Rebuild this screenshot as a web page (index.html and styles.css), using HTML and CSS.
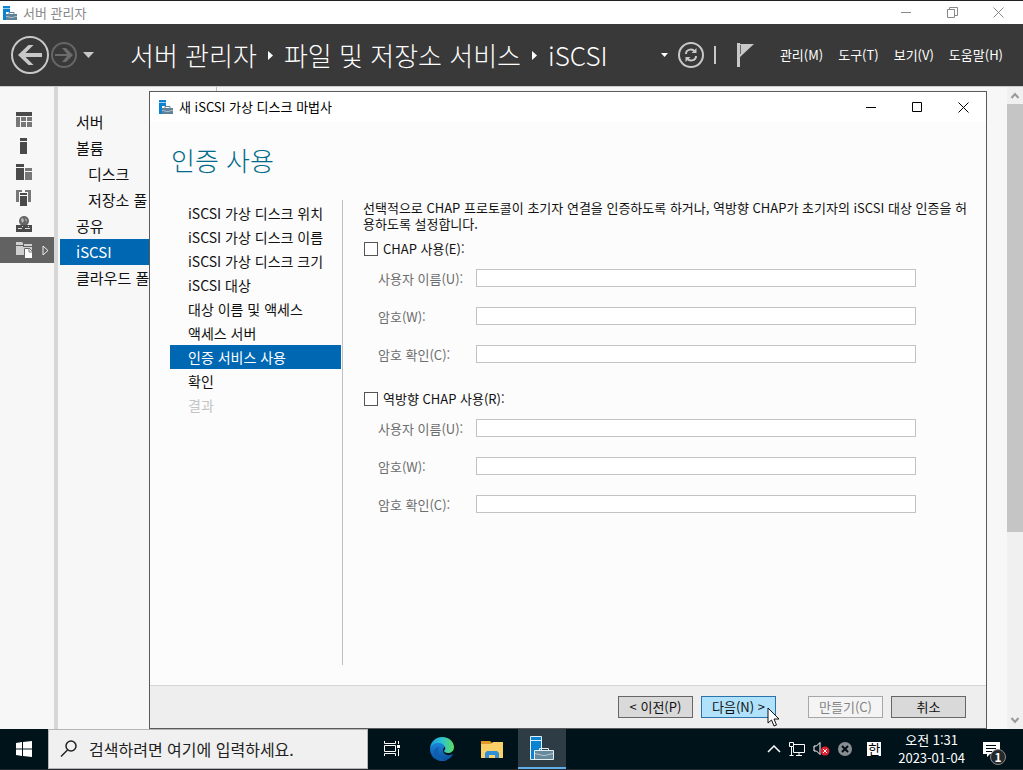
FILE: index.html
```html
<!DOCTYPE html>
<html lang="ko">
<head>
  <meta charset="UTF-8">
  <meta name="viewport" content="width=device-width, initial-scale=1.0">
  <title>서버 관리자</title>
  <link rel="stylesheet" href="styles.css">
</head>
<body>
<svg width="0" height="0" class="defs" aria-hidden="true">
  <symbol id="server-icon" viewBox="0 0 14 14">
    <path fill="#0a84d0" d="M0 0h7v6H3v8H0z"/>
    <path fill="#fff" d="M0 2h7v.6H0z"/>
    <path fill="none" stroke="#5f8296" d="M6 8V6.500h5V8"/>
    <path fill="#5f8296" d="M3 8h11v6H3z"/>
    <path fill="#c5d3db" d="M3 10l5 1h1l5-1v.8l-5 1H8l-5-1z"/>
  </symbol>
  <symbol id="close-icon" viewBox="0 0 11 11">
    <path fill="none" stroke="currentColor" d="M.5.5l10 10M10.5.5l-10 10"/>
  </symbol>
</svg>

<div class="titlebar">
  <svg class="app-icon"><use href="#server-icon"/></svg>
  <span class="titlebar-text">서버 관리자</span>
  <button class="win-btn" aria-label="최소화"><svg width="11" height="11"><path d="M0 5.500h10" stroke="currentColor"/></svg></button>
  <button class="win-btn" aria-label="이전 크기로"><svg width="11" height="11" fill="none" stroke="currentColor"><path d="M.5 2.500h7v8h-7zM2.500 2.500v-2h8v8h-3"/></svg></button>
  <button class="win-btn" aria-label="닫기"><svg width="11" height="11"><use href="#close-icon"/></svg></button>
</div>

<header class="header">
  <button class="icon-btn" aria-label="뒤로">
    <svg width="40" height="40" viewBox="0 0 40 40"><circle cx="20" cy="20" r="18" fill="none" stroke="#c8c8c8" stroke-width="2"/><path d="M32 18H15.500l8-8h-5L8 20l10.500 10h5l-8-8H32z" fill="#c8c8c8"/></svg>
  </button>
  <button class="icon-btn" aria-label="앞으로">
    <svg width="28" height="28" viewBox="0 0 28 28"><circle cx="14" cy="14" r="12" fill="none" stroke="#666" stroke-width="2"/><path d="M5 13h12l-5-6h4l7 7-7 7h-4l5-6H5z" fill="#6c6c6c"/></svg>
  </button>
  <button class="icon-btn history" aria-label="기록"><svg width="11" height="7"><path d="M0 0h11L5.500 6z" fill="#c8c8c8"/></svg></button>
  <div class="breadcrumb">
    <span>서버 관리자</span>
    <svg width="5" height="9"><path d="M0 0l5 4.500L0 9z" fill="#fff"/></svg>
    <span>파일 및 저장소 서비스</span>
    <svg width="5" height="9"><path d="M0 0l5 4.500L0 9z" fill="#fff"/></svg>
    <span>iSCSI</span>
  </div>
  <div class="header-tools">
    <button class="icon-btn" aria-label="목록"><svg width="7" height="4"><path d="M0 0h7L3.500 4z" fill="#fff"/></svg></button>
    <button class="icon-btn" aria-label="새로 고침">
      <svg width="26" height="26" viewBox="0 0 26 26" fill="none" stroke="#c8c8c8"><circle cx="13" cy="13" r="12" stroke-width="2"/><path stroke-width="2" d="M8 12c0-5 7-6 9-2M18 14c0 5-7 6-9 2"/><path d="M18.500 6v5h-5zM7.500 20v-5h5z" fill="#c8c8c8" stroke="none"/></svg>
    </button>
    <span class="separator"></span>
    <button class="icon-btn flag" aria-label="알림">
      <svg width="17" height="24" viewBox="0 0 17 24"><path fill="#c8c8c8" d="M0 0h3v24H0zM3 1h14L3 14z"/><path d="M3.500 2v9" stroke="#666"/></svg>
    </button>
  </div>
  <nav class="menu">
    <a href="#">관리(M)</a>
    <a href="#">도구(T)</a>
    <a href="#">보기(V)</a>
    <a href="#">도움말(H)</a>
  </nav>
</header>

<main class="workspace">
  <div class="rail">
    <button class="rail-btn" aria-label="대시보드"><svg width="16" height="16"><path fill="#4a4a4a" d="M0 0h16v4H0z"/><path fill="#777" d="M0 5h4v10H0zM5 5h5v4H5zM11 5h5v4h-5zM5 10h5v5H5zM11 10h5v5h-5z"/></svg></button>
    <button class="rail-btn" aria-label="로컬 서버"><svg width="16" height="16"><path fill="#4a4a4a" d="M4 0h7v3H4zM4 4h7v12H4z"/></svg></button>
    <button class="rail-btn" aria-label="모든 서버"><svg width="16" height="16"><path fill="#4a4a4a" d="M0 0h8v3H0zM0 4h8v12H0z"/><path fill="#777" d="M9 4h7v3H9zM9 8h7v8H9z"/></svg></button>
    <button class="rail-btn" aria-label="서버 그룹"><svg width="16" height="16"><path fill="#777" d="M0 0h6v2H3v10H0zM9 0h6v12h-3V2H9z"/><path fill="#4a4a4a" d="M4 3h7v2H4zM4 6h7v10H4z"/></svg></button>
    <button class="rail-btn" aria-label="원격 서비스"><svg width="16" height="16"><circle cx="8" cy="5" r="5" fill="#666"/><path d="M5 3l2-1 1 3-2 2zM9 2l2 2-1 2z" fill="#bbb"/><path fill="#4a4a4a" d="M0 9h16v7H0z"/><path fill="#ddd" d="M2 12h4v1H2zM9 12h5v1H9zM6 10h1v1H6zM12 10h1v1h-1z"/></svg></button>
    <button class="rail-btn active" aria-label="파일 서비스">
      <svg width="16" height="16"><path fill="#d0d0d0" d="M0 0h6l1 1v2H0zM0 4h7v9H0zM8 2h8v2H8zM7 5h9v8H7z"/><path fill="#fff" stroke="#666" d="M8.500 6.500h5l3 3v7h-8z"/><path d="M13 6v4h3" fill="none" stroke="#777"/></svg>
      <svg width="7" height="11" class="rail-arrow"><path d="M1 1l5 4.500L1 10z" fill="none" stroke="#eee"/></svg>
    </button>
  </div>

  <nav class="side-nav">
    <a href="#">서버</a>
    <a href="#">볼륨</a>
    <a href="#" class="sub">디스크</a>
    <a href="#" class="sub">저장소 풀</a>
    <a href="#">공유</a>
    <a href="#" class="active">iSCSI</a>
    <a href="#">클라우드 폴더</a>
  </nav>

  <div class="scrollbar">
    <svg width="16" height="17"><path d="M4.500 11l3.500-4 3.500 4" fill="none" stroke="#999" stroke-width="2"/></svg>
    <div class="thumb"></div>
    <svg width="16" height="17" class="down"><path d="M4.500 6l3.500 4 3.500-4" fill="none" stroke="#999" stroke-width="2"/></svg>
  </div>

  <section class="dialog" role="dialog" aria-labelledby="dialog-title">
    <div class="dialog-bar">
      <svg class="app-icon"><use href="#server-icon"/></svg>
      <span id="dialog-title" class="dialog-title">새 iSCSI 가상 디스크 마법사</span>
      <button class="win-btn" aria-label="최소화"><svg width="11" height="11"><path d="M0 5.500h10" stroke="currentColor"/></svg></button>
      <button class="win-btn" aria-label="최대화"><svg width="11" height="11"><path d="M.5.5h9v9h-9z" fill="none" stroke="currentColor"/></svg></button>
      <button class="win-btn" aria-label="닫기"><svg width="11" height="11"><use href="#close-icon"/></svg></button>
    </div>
    <h1 class="dialog-heading">인증 사용</h1>
    <div class="dialog-body">
      <ul class="steps">
        <li>iSCSI 가상 디스크 위치</li>
        <li>iSCSI 가상 디스크 이름</li>
        <li>iSCSI 가상 디스크 크기</li>
        <li>iSCSI 대상</li>
        <li>대상 이름 및 액세스</li>
        <li>액세스 서버</li>
        <li class="current">인증 서비스 사용</li>
        <li>확인</li>
        <li class="disabled">결과</li>
      </ul>
      <form class="form">
        <p>선택적으로 CHAP 프로토콜이 초기자 연결을 인증하도록 하거나, 역방향 CHAP가 초기자의 iSCSI 대상 인증을 허용하도록 설정합니다.</p>
        <div class="group">
          <label class="check"><input type="checkbox"> CHAP 사용(E):</label>
          <div class="field"><label for="user1">사용자 이름(U):</label><input type="text" id="user1" disabled></div>
          <div class="field"><label for="pass1">암호(W):</label><input type="password" id="pass1" disabled></div>
          <div class="field"><label for="confirm1">암호 확인(C):</label><input type="password" id="confirm1" disabled></div>
        </div>
        <div class="group">
          <label class="check"><input type="checkbox"> 역방향 CHAP 사용(R):</label>
          <div class="field"><label for="user2">사용자 이름(U):</label><input type="text" id="user2" disabled></div>
          <div class="field"><label for="pass2">암호(W):</label><input type="password" id="pass2" disabled></div>
          <div class="field"><label for="confirm2">암호 확인(C):</label><input type="password" id="confirm2" disabled></div>
        </div>
      </form>
    </div>
    <div class="dialog-footer">
      <button class="btn">&lt; 이전(P)</button>
      <button class="btn primary">다음(N) &gt;
        <svg class="cursor" width="13" height="20" viewBox="0 0 13 20"><path d="M1 1v15l3.500-3 2.500 6 2.500-1L7 12h5z" fill="#fff" stroke="#111"/></svg>
      </button>
      <button class="btn create" disabled>만들기(C)</button>
      <button class="btn">취소</button>
    </div>
  </section>
</main>

<footer class="taskbar">
  <button class="start" aria-label="시작"><svg width="16" height="16"><path fill="#fff" d="M0 2l6-1v6.500H0zM7 1l9-1v7.500H7zM0 8.500h6V15l-6-1zM7 8.500h9V16l-9-1z"/></svg></button>
  <label class="search">
    <svg width="18" height="18" fill="none" stroke="#222" stroke-width="1.500"><circle cx="11" cy="6" r="5"/><path d="M7.500 10L1 16.500"/></svg>
    <input type="text" placeholder="검색하려면 여기에 입력하세요." aria-label="검색">
  </label>
  <button class="task" aria-label="작업 보기"><svg width="17" height="16" fill="none" stroke="#fff"><path d="M.5 0v2.500h11V0M.5 4.500h11v6H.5zM.5 15v-2.500h11V15M14.500 0v3M14.500 8v7"/><path d="M13 4h3v3h-3z" fill="#fff" stroke="none"/></svg></button>
  <button class="task" aria-label="Edge">
    <svg width="24" height="24" viewBox="0 0 24 24">
      <defs>
        <linearGradient id="edge-top" x1="0" y1="0" x2="1" y2="0"><stop offset="0" stop-color="#1e9bdc"/><stop offset=".5" stop-color="#2cc3d0"/><stop offset="1" stop-color="#5fdc62"/></linearGradient>
        <linearGradient id="edge-low" x1="0" y1="0" x2="0" y2="1"><stop offset="0" stop-color="#1b8be0"/><stop offset="1" stop-color="#0c4f9f"/></linearGradient>
      </defs>
      <path fill="url(#edge-low)" d="M0 12c0-5 5-8 9-8 3 0 6 2 6 5l-1 2c-2 2-1 6 3 7 2 .5 4 0 6-1-2 4-6 7-11 7C5 24 0 19 0 12z"/>
      <path fill="#0f5fae" d="M9 10c-3 6 1 13 8 13-2 1-4 1-6 1-5-1-7-5-7-8 0-4 3-6 5-6z"/>
      <path fill="url(#edge-top)" d="M0 11C1 4 6 0 12 0c8 0 12 6 12 10 0 4-3 6-6 6-2 0-4-1-4-2 0-1 2-1 1-4-1-2-3-4-6-4-4 0-8 2-9 5z"/>
    </svg>
  </button>
  <button class="task" aria-label="파일 탐색기"><svg width="22" height="19"><path fill="#e39a22" d="M0 1h9l2 2v3H0z"/><path fill="#fcd068" d="M0 4h10l2-2h10v16H0z"/><path fill="#2f8fd8" d="M4 18v-5l2-2h10l2 2v5h-4v-3H8v3z"/></svg></button>
  <button class="task active" aria-label="서버 관리자"><svg width="25" height="25"><path fill="#0a84d0" stroke="#e0f0fa" d="M.5.5h11v23H.5z"/><path d="M1 4.500h10" stroke="#e0f0fa"/><path d="M9.500 15v-2.500h9V15" fill="none" stroke="#e4edf2"/><path fill="#66899c" stroke="#e4edf2" d="M4.500 14.500h19v9h-19z"/><path d="M5 17.500l8 2h2l8-2" fill="none" stroke="#b5c6d0"/></svg></button>
  <div class="tray">
    <svg width="14" height="8"><path d="M1 7l6-6 6 6" fill="none" stroke="#fff" stroke-width="1.500"/></svg>
    <svg width="16" height="15" fill="none" stroke="#fff"><path d="M5 2.500h10.500v8H4.500V5M.5.5h4v4h-4zM2.500 5v9M7 13.500h6M10 10.500v3M.5 13.500h4"/></svg>
    <svg width="17" height="16"><path d="M1 5h2.500L7 1.500v12L3.500 10H1z" fill="none" stroke="#fff"/><circle cx="12" cy="10" r="4.500" fill="#e02030"/><path d="M10 8l4 4M14 8l-4 4" stroke="#fff"/></svg>
    <svg width="14" height="14"><circle cx="7" cy="7" r="7" fill="#888d91"/><path d="M4 4l6 6M10 4l-6 6" stroke="#000c14" stroke-width="2"/></svg>
    <span class="ime">한</span>
    <div class="clock"><span>오전 1:31</span><span>2023-01-04</span></div>
    <div class="notice">
      <svg width="17" height="15"><path d="M0 0h17v12H7l-3 3v-3H0z" fill="#fff"/><path d="M3 3.500h10M3 6.500h10M3 9.500h6" stroke="#000c14"/></svg>
      <span class="badge">1</span>
    </div>
  </div>
</footer>
</body>
</html>
```

FILE: styles.css
```css
* {
  box-sizing: border-box;
}

body {
  margin: 0;
  height: 100vh;
  display: flex;
  flex-direction: column;
  overflow: hidden;
  font-family: "Noto Sans CJK KR", "Open Sans", sans-serif;
  font-size: 13px;
  line-height: 16px;
  color: #111;
  background: #f7f7f7;
}

button, input {
  font: inherit;
  color: inherit;
}

button {
  padding: 0;
  border: none;
  background: none;
}

a {
  color: inherit;
  text-decoration: none;
}

svg {
  display: block;
  flex: none;
}

.defs {
  position: absolute;
}

.app-icon {
  width: 14px;
  height: 14px;
}

/* main window */
.titlebar {
  display: flex;
  align-items: center;
  height: 24px;
  padding: 0 2px 0 3px;
  border-top: 1px solid #231f20;
  background: #fff;
  color: #888;
}

.titlebar-text {
  flex: 1;
  margin-left: 6px;
}

.win-btn {
  width: 46px;
  height: 22px;
  display: flex;
  align-items: center;
  justify-content: center;
}

.header {
  display: flex;
  align-items: center;
  height: 63px;
  padding: 0 20px 0 10px;
  border-bottom: 1px solid #ccc;
  background: #393939;
  color: #fff;
}

.icon-btn {
  display: flex;
  align-items: center;
}

.history {
  margin-left: 5px;
}

.breadcrumb {
  flex: 1;
  display: flex;
  align-items: center;
  gap: 11px;
  margin-left: 36px;
  font-size: 26px;
  font-weight: 300;
  line-height: 40px;
  white-space: nowrap;
}

.header-tools {
  display: flex;
  align-items: center;
  gap: 10px;
}

.separator {
  width: 2px;
  height: 18px;
  background: #c8c8c8;
}

.flag {
  margin-left: 11px;
}

.menu {
  display: flex;
  gap: 15px;
  margin-left: 26px;
  white-space: nowrap;
}

.workspace {
  position: relative;
  flex: 1;
  display: flex;
  min-height: 0;
}

.rail {
  width: 58px;
  padding-top: 20px;
  border-right: 4px solid #d6d6d6;
}

.rail-btn {
  width: 100%;
  height: 26px;
  padding-left: 16px;
  display: flex;
  align-items: center;
}

.rail-btn.active {
  background: #626262;
}

.rail-arrow {
  margin-left: 10px;
}

.side-nav {
  width: 159px;
  padding: 22px 0 0 2px;
  border-right: 1px solid #bbb;
  font-size: 15px;
  line-height: 26px;
}

.side-nav a {
  display: block;
  padding-left: 16px;
}

.side-nav .sub {
  padding-left: 28px;
}

.side-nav .active {
  background: #0067b3;
  color: #fff;
}

.scrollbar {
  width: 16px;
  margin-left: auto;
  display: flex;
  flex-direction: column;
  background: #f0f0f0;
}

.thumb {
  flex: 0 1 428px;
  background: #c5c5c5;
}

.scrollbar .down {
  margin-top: auto;
}

/* wizard */
.dialog {
  position: absolute;
  top: 4px;
  right: 36px;
  bottom: 0;
  left: 149px;
  display: flex;
  flex-direction: column;
  border: 1px solid #5a5a5a;
  background: #fcfcfc;
}

.dialog-bar {
  display: flex;
  align-items: center;
  height: 30px;
  padding-left: 9px;
  background: #fff;
  color: #000;
}

.dialog-title {
  flex: 1;
  margin-left: 6px;
}

.dialog-heading {
  margin: 18px 0 20px 21px;
  font-size: 26px;
  font-weight: 300;
  line-height: 40px;
  color: #006a8a;
}

.dialog-body {
  flex: 1;
  display: flex;
  padding: 0 16px 0 20px;
  margin-bottom: 20px;
}

.steps {
  width: 173px;
  margin: 0;
  padding: 1px 1px 0 0;
  border-right: 1px solid #c0c0c0;
  list-style: none;
  font-size: 14px;
  line-height: 24px;
  white-space: nowrap;
}

.steps li {
  padding-left: 18px;
}

.steps .current {
  background: #0067b3;
  color: #fff;
}

.steps .disabled {
  color: #c4c4c4;
}

.form {
  flex: 1;
  padding-left: 20px;
}

.form p {
  margin: 0;
  word-break: break-all;
}

.group {
  margin: 9px 54px 28px 0;
}

.check {
  display: flex;
  align-items: center;
  gap: 5px;
  margin-bottom: 12px;
}

.check input {
  appearance: none;
  width: 14px;
  height: 14px;
  margin: 0 0 0 1px;
  border: 1px solid #555;
  background: #fff;
}

.field {
  display: flex;
  align-items: flex-end;
  margin-bottom: 20px;
  padding-left: 15px;
  color: #6d6d6d;
}

.field label {
  width: 98px;
}

.field input {
  flex: 1;
  min-width: 0;
  height: 18px;
  padding: 0 4px;
  border: 1px solid #c3c3c7;
  background: #fff;
}

.dialog-footer {
  display: flex;
  justify-content: flex-end;
  gap: 8px;
  height: 43px;
  padding: 10px 20px;
  border-top: 1px solid #d5d5d5;
  background: #eee;
}

.btn {
  position: relative;
  width: 75px;
  height: 22px;
  border: 1px solid #666;
  background: #d9d9d9;
}

.btn.primary {
  border-color: #2a74ad;
  background: #b0e2fb;
}

.btn.create {
  margin-left: 24px;
  border-color: #a5a8aa;
  background: #f4f4f4;
  color: #838383;
}

.cursor {
  position: absolute;
  top: 10px;
  left: 65px;
  z-index: 1;
}

/* taskbar */
.taskbar {
  display: flex;
  height: 41px;
  border-bottom: 1px solid #26292b;
  background: #00131b;
  color: #fff;
}

.start, .task {
  width: 48px;
  display: flex;
  align-items: center;
  justify-content: center;
}

.task {
  margin-right: 2px;
}

.task.active {
  margin: 0;
  border-bottom: 2px solid #62aee8;
  background: #2d3c45;
}

.search {
  flex: 0 1 320px;
  display: flex;
  align-items: center;
  gap: 11px;
  padding-left: 11px;
  border: 1px solid #b5b5b5;
  background: #f0f0f0;
}

.search input {
  flex: 1;
  min-width: 0;
  padding: 0;
  border: none;
  background: none;
  font-size: 16px;
  color: #222;
}

.search input::placeholder {
  color: #222;
}

.tray {
  display: flex;
  align-items: center;
  gap: 8px;
  margin-left: auto;
  padding-right: 16px;
}

.ime {
  width: 14px;
  margin: 0 9px 0 7px;
  background: #fff;
  color: #000;
  line-height: 14px;
  text-align: center;
}

.clock {
  display: flex;
  flex-direction: column;
  align-items: center;
  line-height: 18px;
}

.notice {
  position: relative;
  margin-left: 10px;
  padding-right: 7px;
}

.badge {
  position: absolute;
  top: 7px;
  left: 7px;
  width: 16px;
  height: 16px;
  border: 1px solid #8a8a8a;
  border-radius: 50%;
  background: #26292b;
  font-size: 12px;
  font-weight: bold;
  line-height: 14px;
  text-align: center;
}
```
